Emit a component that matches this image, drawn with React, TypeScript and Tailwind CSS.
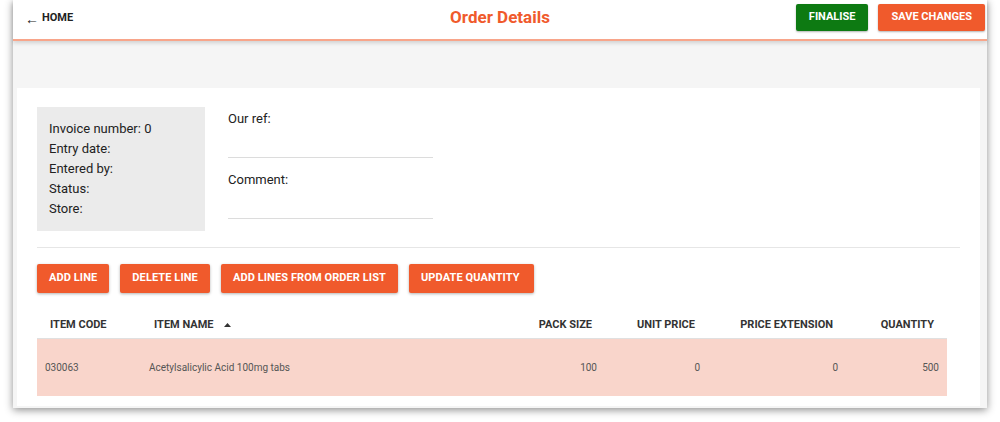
import React from "react";

const btn =
  "h-[29px] px-3 rounded-[2px] bg-[#f05a2c] text-white text-[11px] font-bold tracking-[0.1px] shadow-[0_1px_3px_rgba(0,0,0,0.3)] flex items-center";

export default function App() {
  return (
    <div className="w-[1000px] h-[422px] bg-white font-['Roboto',sans-serif] overflow-hidden">
      <div className="ml-[13px] w-[974px] h-[408px] bg-[#f5f5f5] flex flex-col shadow-[0_2px_8px_rgba(0,0,0,0.45)]">
        {/* header */}
        <div className="relative h-[41px] shrink-0 bg-white border-b-2 border-[#f8a58a] shadow-[0_2px_4px_rgba(0,0,0,0.15)] flex items-center justify-between pl-3 pr-[2px]">
          <div className="text-[11px] font-bold text-[#222] flex items-center gap-[3px] -mt-[2px]">
            <span className="text-[14px] font-normal leading-none">←</span>
            <span>HOME</span>
          </div>
          <div className="absolute left-1/2 -translate-x-1/2 top-[5px] text-[17px] font-bold text-[#f05a2c]">
            Order Details
          </div>
          <div className="flex gap-[10px] -mt-[5px]">
            <div className="h-[27px] px-[13px] rounded-[2px] bg-[#0d7a12] text-white text-[11px] font-bold flex items-center shadow-[0_1px_2px_rgba(0,0,0,0.3)]">
              FINALISE
            </div>
            <div className="h-[27px] px-[13px] rounded-[2px] bg-[#f05a2c] text-white text-[11px] font-bold flex items-center shadow-[0_1px_2px_rgba(0,0,0,0.3)]">
              SAVE CHANGES
            </div>
          </div>
        </div>
        {/* body */}
        <div className="flex-1 pt-[47px] pl-[4px] pr-[7px]">
          <div className="bg-white h-[318px] px-5 pt-[19px]">
            <div className="flex gap-[23px]">
              <div className="w-[168px] h-[124px] bg-[#ebebeb] p-3 text-[13px] leading-5 text-[#222]">
                <div>Invoice number: 0</div>
                <div>Entry date:</div>
                <div>Entered by:</div>
                <div>Status:</div>
                <div>Store:</div>
              </div>
              <div className="w-[205px] text-[13px] text-[#222]">
                <div className="pt-[4px] leading-4">Our ref:</div>
                <div className="h-[31px] border-b border-[#dcdcdc]"></div>
                <div className="mt-[14px] leading-4">Comment:</div>
                <div className="h-[31px] border-b border-[#dcdcdc]"></div>
              </div>
            </div>
            <div className="mt-[16px] border-t border-[#e6e6e6]"></div>
            <div className="mt-[16px] flex gap-[11px]">
              <div className={btn}>ADD LINE</div>
              <div className={btn}>DELETE LINE</div>
              <div className={btn}>ADD LINES FROM ORDER LIST</div>
              <div className={btn + " pr-[14px]"}>UPDATE QUANTITY</div>
            </div>
            <div className="w-[910px] mt-[16px]">
              <div className="grid grid-cols-[104px_360px_104px_103px_138px_101px] h-[30px] items-center border-b border-[#e0e0e0] text-[11px] font-bold text-[#333]">
                <div className="pl-[13px] pt-[3px]">ITEM CODE</div>
                <div className="pl-[13px] pt-[3px] flex items-center gap-[10px]">
                  ITEM NAME
                  <svg width="7" height="4" viewBox="0 0 7 4">
                    <path d="M0 4 L3.5 0 L7 4 Z" fill="#333" />
                  </svg>
                </div>
                <div className="text-right pr-[13px] pt-[3px]">PACK SIZE</div>
                <div className="text-right pr-[13px] pt-[3px]">UNIT PRICE</div>
                <div className="text-right pr-[13px] pt-[3px]">PRICE EXTENSION</div>
                <div className="text-right pr-[13px] pt-[3px]">QUANTITY</div>
              </div>
              <div className="grid grid-cols-[104px_360px_104px_103px_138px_101px] h-[57px] items-center bg-[#f9d5cb] text-[10px] text-[#555]">
                <div className="pl-2">030063</div>
                <div className="pl-2">Acetylsalicylic Acid 100mg tabs</div>
                <div className="text-right pr-2">100</div>
                <div className="text-right pr-2">0</div>
                <div className="text-right pr-2">0</div>
                <div className="text-right pr-2">500</div>
              </div>
            </div>
          </div>
        </div>
      </div>
    </div>
  );
}
